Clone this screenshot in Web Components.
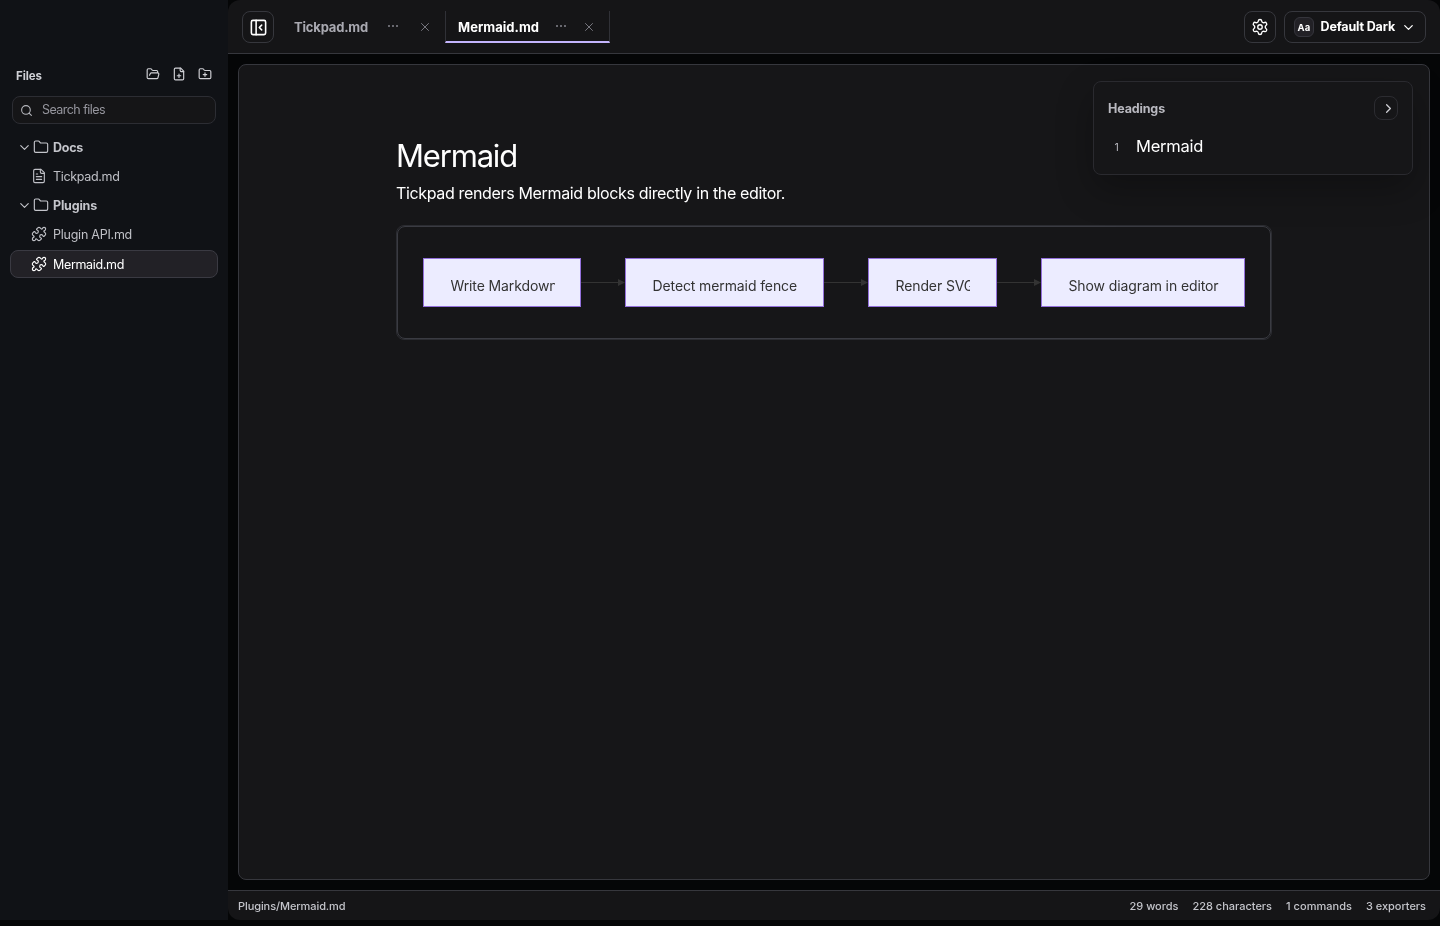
<!DOCTYPE html>
<html lang="en"><head><meta charset="utf-8"><title>Tickpad</title>
<style>
html,body{margin:0;height:100%;background:#050607;overflow:hidden}
body{font-family:Inter,"Liberation Sans",sans-serif;color:#fff;font-size:13px}
</style></head><body>
<tick-app></tick-app>
<script>
const define=(name,html,init)=>customElements.define(name,class extends HTMLElement{
  constructor(){super();const t=document.createElement('template');t.innerHTML=html;
    this.attachShadow({mode:'open'}).append(t.content.cloneNode(true));}
  connectedCallback(){if(init)init.call(this,this.shadowRoot);}
});

/* Stroke icons, all on a 24-unit grid */
const icons={
 search:'<circle cx="11" cy="11" r="8"/><path d="m21 21-4.3-4.3"/>',
 down:'<path d="m6 9 6 6 6-6"/>',
 right:'<path d="m9 18 6-6-6-6"/>',
 close:'<path d="M18 6 6 18M6 6l12 12"/>',
 dots:'<g fill="currentColor" stroke="none"><circle cx="4" cy="12" r="2"/><circle cx="12" cy="12" r="2"/><circle cx="20" cy="12" r="2"/></g>',
 folder:'<path d="M20 20a2 2 0 0 0 2-2V8a2 2 0 0 0-2-2h-7.9a2 2 0 0 1-1.69-.9L9.6 3.9A2 2 0 0 0 7.93 3H4a2 2 0 0 0-2 2v13a2 2 0 0 0 2 2Z"/>',
 open:'<path d="m6 14 1.5-2.9A2 2 0 0 1 9.24 10H20a2 2 0 0 1 1.94 2.5l-1.54 6a2 2 0 0 1-1.95 1.5H4a2 2 0 0 1-2-2V5a2 2 0 0 1 2-2h3.9a2 2 0 0 1 1.69.9l.81 1.2a2 2 0 0 0 1.67.9H18a2 2 0 0 1 2 2v2"/>',
 fileplus:'<path d="M15 2H6a2 2 0 0 0-2 2v16a2 2 0 0 0 2 2h12a2 2 0 0 0 2-2V7Z"/><path d="M14 2v4a2 2 0 0 0 2 2h4M9 15h6M12 18v-6"/>',
 folderplus:'<path d="M12 10v6M9 13h6"/><path d="M20 20a2 2 0 0 0 2-2V8a2 2 0 0 0-2-2h-7.9a2 2 0 0 1-1.69-.9L9.6 3.9A2 2 0 0 0 7.93 3H4a2 2 0 0 0-2 2v13a2 2 0 0 0 2 2Z"/>',
 file:'<path d="M15 2H6a2 2 0 0 0-2 2v16a2 2 0 0 0 2 2h12a2 2 0 0 0 2-2V7Z"/><path d="M14 2v4a2 2 0 0 0 2 2h4M10 9H8M16 13H8M16 17H8"/>',
 puzzle:'<path d="M15.39 4.39a1 1 0 0 0 1.68-.474 2.5 2.5 0 1 1 3.014 3.015 1 1 0 0 0-.474 1.68l1.683 1.682a2.414 2.414 0 0 1 0 3.414L19.61 15.39a1 1 0 0 1-1.68-.474 2.5 2.5 0 1 0-3.014 3.015 1 1 0 0 1 .474 1.68l-1.683 1.682a2.414 2.414 0 0 1-3.414 0L8.61 19.61a1 1 0 0 0-1.68.474 2.5 2.5 0 1 1-3.014-3.015 1 1 0 0 0 .474-1.68l-1.683-1.682a2.414 2.414 0 0 1 0-3.414L4.39 8.61a1 1 0 0 1 1.68.474 2.5 2.5 0 1 0 3.014-3.015 1 1 0 0 1-.474-1.68l1.683-1.682a2.414 2.414 0 0 1 3.414 0z"/>',
 panel:'<rect width="18" height="18" x="3" y="3" rx="2"/><path d="M9 3v18M16 15l-3-3 3-3"/>',
 gear:'<path d="M9.67 4.14a2.34 2.34 0 0 1 4.66 0 2.34 2.34 0 0 0 3.32 1.91 2.34 2.34 0 0 1 2.33 4.04 2.34 2.34 0 0 0 0 3.83 2.34 2.34 0 0 1-2.33 4.03 2.34 2.34 0 0 0-3.32 1.92 2.34 2.34 0 0 1-4.66 0 2.34 2.34 0 0 0-3.32-1.92 2.34 2.34 0 0 1-2.33-4.03 2.34 2.34 0 0 0 0-3.83 2.34 2.34 0 0 1 2.33-4.04 2.34 2.34 0 0 0 3.32-1.91"/><circle cx="12" cy="12" r="3"/>'
};
define('ui-icon','<style>:host{display:block;flex:none}svg{display:block}</style><div></div>',function(r){
  const s=this.getAttribute('size')||16,w=this.getAttribute('weight')||2;
  r.querySelector('div').innerHTML=`<svg width="${s}" height="${s}" viewBox="0 0 24 24" fill="none" stroke="currentColor" stroke-width="${w}" stroke-linecap="round" stroke-linejoin="round">${icons[this.getAttribute('name')]}</svg>`;
});

/* A label whose tracking is adjusted to fill the given width */
define('fit-label','<style>:host{display:block;flex:none;white-space:nowrap}span{display:inline-block}</style><span><slot></slot></span>',function(r){
  const w=+this.getAttribute('w'),s=r.querySelector('span');
  this.style.width=w+'px';
  s.style.letterSpacing=((w-s.getBoundingClientRect().width)/this.textContent.length)+'px';
});

define('tool-button','<style>:host{display:flex;box-sizing:border-box;width:32px;height:32px;border:1px solid #36373d;border-radius:8px;align-items:center;justify-content:center;flex:none}</style><slot></slot>');

define('tree-row',`<style>
:host{display:flex;box-sizing:border-box;height:28px;margin:0 10px;align-items:center;color:#bfc0c6;border:1px solid transparent;border-radius:8px;font-size:12.5px;line-height:16px}
:host([kind=folder]){font-weight:700;padding-left:5.5px;color:#c4c5cb}
:host([kind=file]){padding-left:20px}
:host([active]){background:#222126;border-color:#3a3a42;color:#fff}
::slotted(fit-label){padding-top:2px}
</style><slot></slot>`);

define('file-sidebar',`<style>
:host{display:block;width:228px;height:920px;background:#101216;box-sizing:border-box;padding-top:64px}
header{display:flex;align-items:center;height:20px;padding:0 16px;color:#cfd0d5}
.t{font-size:11.5px;font-weight:700;margin-right:auto;padding-top:3px}
header ui-icon{margin-left:12px}
.search{display:flex;align-items:center;box-sizing:border-box;height:28px;margin:12px 12px 9px;border:1px solid #2c2d33;border-radius:8px;background:#151517;padding-left:7px;gap:9px;color:#95959d;font-size:12.5px}
.search fit-label{padding-bottom:2px}
.search ui-icon{color:#b6b7bd}
nav{display:grid;row-gap:1px}
.c{margin-right:1.5px}.f{margin-right:4px}.g{margin:0 6px 0 0}
</style>
<header><fit-label class="t" w="26">Files</fit-label><ui-icon name="open" size="14"></ui-icon><ui-icon name="fileplus" size="14"></ui-icon><ui-icon name="folderplus" size="14"></ui-icon></header>
<div class="search"><ui-icon name="search" size="13"></ui-icon><fit-label w="63">Search files</fit-label></div>
<nav>
<tree-row kind="folder"><ui-icon class="c" name="down" size="15" weight="1.8"></ui-icon><ui-icon class="f" name="folder" size="16" weight="1.7"></ui-icon><fit-label w="30">Docs</fit-label></tree-row>
<tree-row kind="file"><ui-icon class="g" name="file" size="16" weight="1.7"></ui-icon><fit-label w="66.5">Tickpad.md</fit-label></tree-row>
<tree-row kind="folder"><ui-icon class="c" name="down" size="15" weight="1.8"></ui-icon><ui-icon class="f" name="folder" size="16" weight="1.7"></ui-icon><fit-label w="44">Plugins</fit-label></tree-row>
<tree-row kind="file"><ui-icon class="g" name="puzzle" size="16" weight="1.7"></ui-icon><fit-label w="79">Plugin API.md</fit-label></tree-row>
<tree-row kind="file" active style="margin-top:1px"><ui-icon class="g" name="puzzle" size="16" weight="1.7"></ui-icon><fit-label w="71">Mermaid.md</fit-label></tree-row>
</nav>`);

define('file-tab',`<style>
:host{display:flex;box-sizing:border-box;width:164px;height:33px;padding-left:12px;align-items:center;border:1px solid transparent;border-width:0 1px;color:#a9a9b1;font-weight:700;font-size:13px}
:host([active]){width:165px;height:32px;margin-top:1px;color:#fff;border-color:#303137;border-bottom:2px solid #c4b5fd;padding-top:1px}
ui-icon{color:#85858e}.d{margin-left:19px;margin-top:-1px}.x{margin-left:19px}
:host([active]) .d{margin-left:15.5px}
:host([active]) .x{margin-left:15.5px}
</style><slot></slot><ui-icon class="d" name="dots" size="12"></ui-icon><ui-icon class="x" name="close" size="14" weight="1.5"></ui-icon>`);

define('top-bar',`<style>
:host{display:flex;box-sizing:border-box;height:54px;padding:10px 14px 0;background:#151517;border-bottom:1px solid #36373d;border-radius:12px 12px 0 0}
tool-button{margin-top:1px}
.one{margin-left:7px;width:164px}
.sp{flex:1}
.theme{width:142px;margin-left:8px;justify-content:flex-start;padding-left:9px;font-weight:700;font-size:12.5px}
.theme>fit-label{padding-bottom:1px}
.aa{display:flex;box-sizing:border-box;width:20px;height:20px;border:1px solid #35353c;background:#222126;border-radius:6px;align-items:center;justify-content:center;font-size:9.5px;margin-right:6.5px}
.theme ui-icon{margin-left:6px}
</style><tool-button><ui-icon name="panel" size="19"></ui-icon></tool-button>
<file-tab class="one"><fit-label w="74">Tickpad.md</fit-label></file-tab>
<file-tab active><fit-label w="81">Mermaid.md</fit-label></file-tab><div class="sp"></div>
<tool-button><ui-icon name="gear" size="18" weight="1.8"></ui-icon></tool-button>
<tool-button class="theme"><span class="aa"><fit-label w="13">Aa</fit-label></span><fit-label w="74.5">Default Dark</fit-label><ui-icon name="down" size="15"></ui-icon></tool-button>`);

define('flow-node',`<style>
:host{display:block;box-sizing:border-box;height:49px;border:1px solid #9370db;background:#ececff;color:#333;font-size:14px;line-height:20px;padding:17px 0 0 26.5px;letter-spacing:-.11px;flex:none}
div{overflow:hidden;white-space:nowrap;height:19px}
</style><div><slot></slot></div>`,function(r){this.style.width=this.getAttribute('w')+'px';r.querySelector('div').style.width=this.getAttribute('clip')+'px'});
define('flow-arrow',`<style>:host{display:block;width:44px;height:9px;flex:none}svg{display:block}</style>
<svg width="44" height="9"><path d="M0 4.5H38" stroke="#333"/><path d="M37 1v7l7-3.5z" fill="#333"/></svg>`);

define('flow-diagram',`<style>
:host{display:block;box-sizing:border-box;width:876px;height:115px;border:1px solid #2b2c31;border-radius:8px}
.in{display:flex;align-items:center;box-sizing:border-box;height:113px;border:1px solid #3a3b42;border-radius:8px;padding-left:25px}
</style><div class="in">
<flow-node w="158" clip="104">Write Markdown</flow-node><flow-arrow></flow-arrow>
<flow-node w="199" clip="150">Detect mermaid fence</flow-node><flow-arrow></flow-arrow>
<flow-node w="129" clip="74.5">Render SVG</flow-node><flow-arrow></flow-arrow>
<flow-node w="204" clip="153">Show diagram in editor</flow-node></div>`);

define('headings-card',`<style>
:host{display:block;position:absolute;right:16px;top:16px;box-sizing:border-box;width:320px;height:94px;border:1px solid #2a2a2f;border-radius:8px;background:#161618;box-shadow:0 14px 36px rgba(0,0,0,.28);padding:14px}
header{display:flex;justify-content:space-between;align-items:center;height:24px;font-weight:700;font-size:12.5px;color:#b9b9c0}
tool-button{width:24px;height:24px;border-color:#2c2c31;color:#d0d0d5;padding-left:4px}
.row{display:flex;align-items:center;margin-top:14px;height:24px}
.n{width:28px;box-sizing:border-box;padding-left:6.5px;font-size:10.5px;color:#b9b9c0;padding-top:2px}
.h{font-size:16.5px;font-weight:425}
</style><header><fit-label w="57">Headings</fit-label><tool-button><ui-icon name="right" size="15"></ui-icon></tool-button></header>
<div class="row"><span class="n">1</span><fit-label class="h" w="67">Mermaid</fit-label></div>`);

define('doc-editor',`<style>
:host{display:block;position:relative;box-sizing:border-box;width:1192px;height:816px;margin:10px;border:1px solid #36373d;border-radius:8px;background:#161618;padding:70px 0 0 157px}
h1{margin:0;font-weight:425;font-size:31px;line-height:41px;color:#fff}
p{margin:7px 0 22px;font-size:16px;line-height:20px;font-weight:425}
</style><h1><fit-label w="121">Mermaid</fit-label></h1><p><fit-label w="389">Tickpad renders Mermaid blocks directly in the editor.</fit-label></p>
<flow-diagram></flow-diagram><headings-card></headings-card>`);

define('status-bar',`<style>
:host{display:flex;box-sizing:border-box;height:30px;border-top:1px solid #36373d;background:#151517;border-radius:0 0 12px 12px;padding:1px 14px 0 10px;align-items:center;color:#c3c4ca;font-size:11px;font-weight:450;gap:14px}
.p{margin-right:auto}
</style><fit-label class="p" w="107.5">Plugins/Mermaid.md</fit-label><fit-label w="49">29 words</fit-label><fit-label w="79.5">228 characters</fit-label><fit-label w="66">1 commands</fit-label><fit-label w="60">3 exporters</fit-label>`);

define('tick-app',`<style>:host{display:grid;grid-template-columns:228px 1212px;height:920px;will-change:transform}
main{display:flex;flex-direction:column;height:920px}</style>
<file-sidebar></file-sidebar><main><top-bar></top-bar><doc-editor></doc-editor><status-bar></status-bar></main>`);
</script></body></html>
